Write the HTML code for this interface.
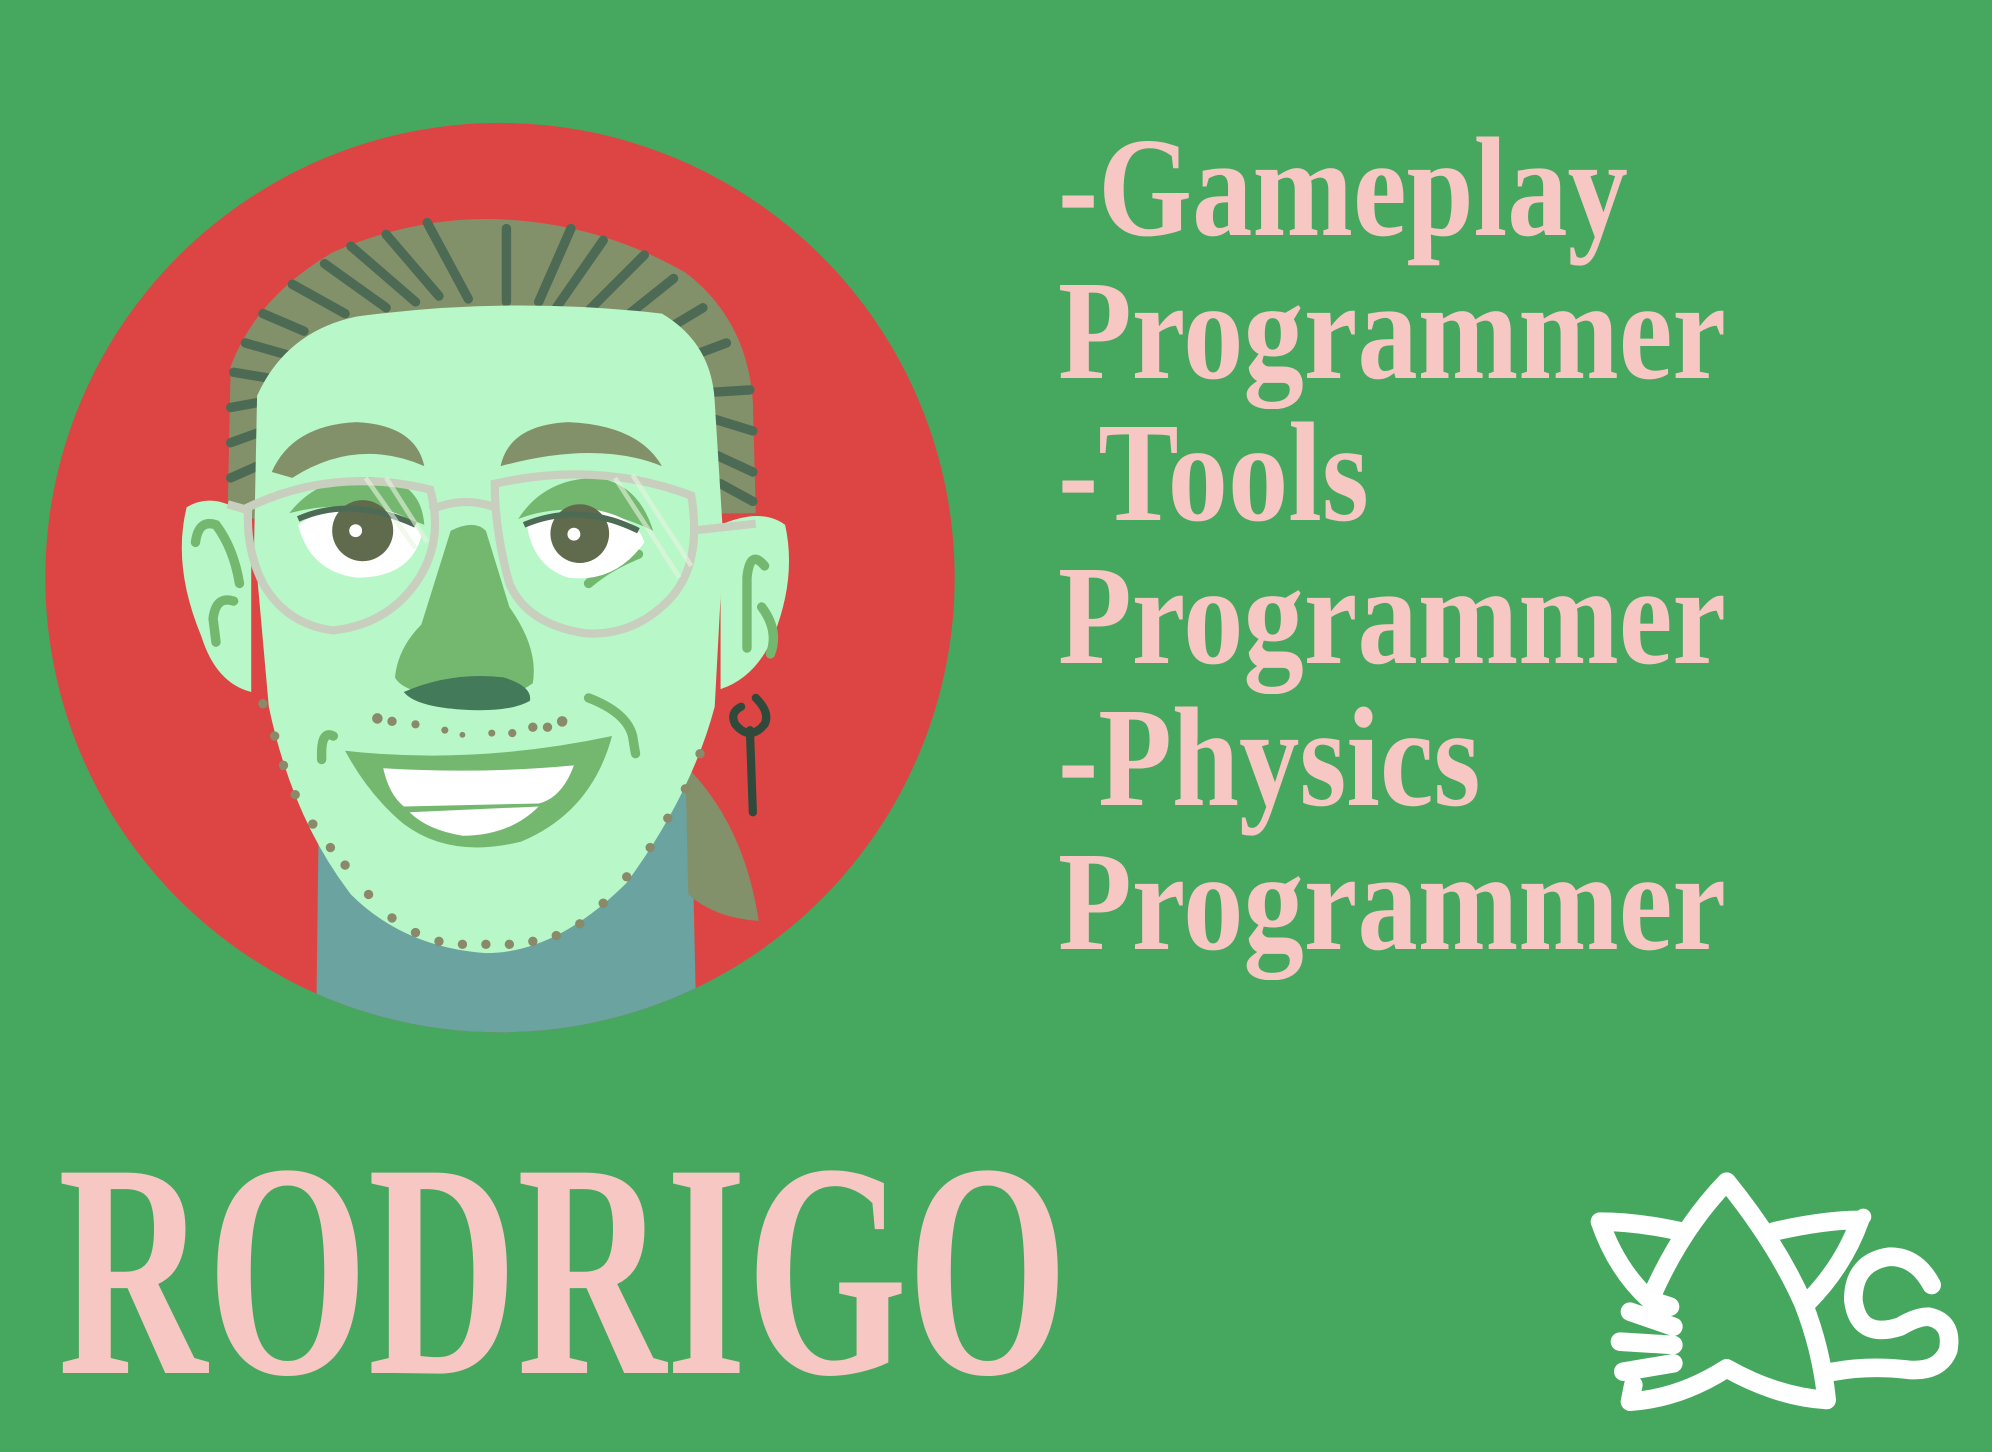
<!DOCTYPE html>
<html><head><meta charset="utf-8"><style>
html,body{margin:0;padding:0}
body{width:1992px;height:1452px;background:#45a85e;position:relative;overflow:hidden;font-family:"Liberation Serif",serif;color:#f6c7c3}
.l{position:absolute;left:1058px;font-size:142px;font-weight:bold;line-height:1;transform:scaleX(0.85);transform-origin:0 0;white-space:nowrap}
.name{position:absolute;left:58px;top:1118px;font-size:306px;font-weight:bold;line-height:1;transform:scaleX(0.675);transform-origin:0 0;white-space:nowrap}
svg{position:absolute;left:0;top:0}
</style></head><body>
<svg width="1992" height="1452" viewBox="0 0 1992 1452">
<defs><clipPath id="c"><circle cx="784" cy="780" r="775"/></clipPath></defs>
<g transform="translate(40,120) scale(0.5867)">
<circle cx="784" cy="780" r="775" fill="#dd4545"/>
<g clip-path="url(#c)">
<path d="M475,1200 L1110,1140 L1120,1600 L470,1600 Z" fill="#6aa3a0"/>
<path d="M1100,1100 Q1200,1200 1225,1365 Q1150,1360 1105,1320 Z" fill="#83916a"/>
<path d="M320,660 L325,420 Q370,300 500,225 Q650,160 800,170 Q960,180 1100,260 Q1205,340 1215,480 L1220,670 L320,680 Z" fill="#83916a"/>
<g stroke="#4d6a55" stroke-width="16" stroke-linecap="round" fill="none">
<path d="M430,280 L520,330"/><path d="M485,245 L590,320"/><path d="M530,215 L640,310"/><path d="M590,195 L680,300"/><path d="M660,175 L730,305"/><path d="M795,185 L795,310"/><path d="M905,185 L850,310"/><path d="M960,205 L880,320"/><path d="M1030,230 L930,330"/><path d="M1080,270 L980,350"/><path d="M1130,320 L1030,380"/><path d="M1170,380 L1090,410"/><path d="M1210,460 L1130,465"/><path d="M1215,530 L1150,510"/><path d="M1215,600 L1150,570"/><path d="M1215,650 L1160,620"/>
<path d="M380,330 L450,360"/><path d="M350,380 L420,400"/><path d="M330,430 L390,440"/><path d="M325,490 L380,480"/><path d="M325,550 L380,530"/><path d="M325,610 L370,590"/>
</g>
<path d="M370,470 Q420,360 540,335 Q800,300 1060,330 Q1145,380 1150,480 L1165,720 L1150,1000 Q1110,1150 1000,1300 Q880,1420 760,1420 Q620,1410 530,1320 Q430,1190 390,1000 L365,720 Z" fill="#b8f8c8"/>
<path d="M360,680 Q300,630 250,660 Q225,760 275,880 Q300,960 360,975 Z" fill="#b8f8c8"/>
<path d="M1160,690 Q1230,660 1270,690 Q1290,780 1250,880 Q1220,950 1160,970 Z" fill="#b8f8c8"/>
<g stroke="#74b870" stroke-width="16" stroke-linecap="round" fill="none">
<path d="M265,720 Q270,680 300,690 Q330,730 340,790"/><path d="M330,820 Q300,810 295,850 L300,890"/>
<path d="M1235,760 Q1210,730 1205,780 L1205,900"/><path d="M1230,830 Q1260,870 1245,910"/>
<path d="M500,1050 Q480,1040 480,1080 L480,1090"/><path d="M935,985 Q1000,1010 1010,1050 L1015,1080"/>
<path d="M935,790 Q970,760 1020,740"/>
</g>
<path d="M395,600 Q430,520 540,515 Q640,520 655,590 Q540,540 430,610 Z" fill="#83916a"/>
<path d="M785,590 Q800,520 900,515 Q1020,520 1060,590 Q950,545 785,590 Z" fill="#83916a"/>
<path d="M425,670 Q480,600 580,610 Q650,620 655,690 Q540,640 425,670 Z" fill="#74b870"/>
<path d="M815,680 Q860,610 950,610 Q1020,620 1045,700 Q920,640 815,680 Z" fill="#74b870"/>
<path d="M440,690 Q480,660 560,660 Q640,670 650,710 Q630,780 540,780 Q460,770 440,690 Z" fill="#fff"/>
<path d="M830,690 Q880,660 950,665 Q1020,680 1030,720 Q980,790 900,780 Q840,760 830,690 Z" fill="#fff"/>
<circle cx="550" cy="700" r="52" fill="#5f6b4c"/><circle cx="920" cy="705" r="50" fill="#5f6b4c"/>
<circle cx="538" cy="700" r="11" fill="#fff"/><circle cx="910" cy="706" r="11" fill="#fff"/>
<path d="M440,680 Q530,640 640,690" stroke="#4d6a55" stroke-width="10" fill="none"/>
<path d="M825,690 Q920,650 1020,700" stroke="#4d6a55" stroke-width="10" fill="none"/>
<path d="M700,700 Q740,680 760,700 L800,830 Q850,900 840,960 Q800,990 720,985 Q620,980 605,950 Q610,900 650,860 Z" fill="#74b870"/>
<path d="M620,975 Q700,940 790,950 Q840,965 835,990 Q800,1010 720,1005 Q640,1000 620,975 Z" fill="#427a5a"/>
<g fill="#8a8a6a"><circle cx="575" cy="1020" r="9"/><circle cx="600" cy="1025" r="8"/><circle cx="640" cy="1030" r="7"/><circle cx="690" cy="1040" r="6"/><circle cx="720" cy="1048" r="5"/><circle cx="770" cy="1045" r="6"/><circle cx="805" cy="1045" r="7"/><circle cx="840" cy="1035" r="8"/><circle cx="865" cy="1035" r="8"/><circle cx="890" cy="1025" r="9"/></g>
<path d="M520,1075 Q740,1100 975,1050 Q940,1180 820,1230 Q700,1260 620,1200 Q560,1150 520,1075 Z" fill="#74b870"/>
<path d="M585,1105 Q750,1115 910,1100 Q890,1155 850,1165 L620,1170 Q595,1150 585,1105 Z" fill="#fff"/>
<path d="M630,1180 Q740,1175 850,1170 Q800,1220 720,1220 Q660,1210 630,1180 Z" fill="#fff"/>
<g stroke="#c8cfbf" stroke-width="14" fill="none">
<path d="M355,660 Q500,590 665,630 Q690,720 640,790 Q590,860 500,870 Q420,860 380,790 Q350,730 355,660 Z"/>
<path d="M775,620 Q950,580 1110,640 Q1130,760 1070,820 Q1010,880 930,875 Q830,860 800,790 Q775,700 775,620 Z"/>
<path d="M665,665 Q720,640 775,660"/><path d="M320,655 L355,665"/><path d="M1110,700 L1220,688"/>
</g>
<g stroke="#e8f4e0" stroke-width="8" opacity="0.6"><path d="M555,610 L640,730"/><path d="M590,610 L660,720"/><path d="M980,610 L1090,780"/><path d="M1010,605 L1110,760"/></g>
<path d="M1215,1180 L1210,1040 M1220,985 Q1245,1010 1235,1030 Q1210,1060 1185,1030 Q1175,1010 1195,1000" stroke="#2f4a3a" stroke-width="14" stroke-linecap="round" fill="none"/>
<g fill="#8a8a6a"><circle cx="380" cy="995" r="8"/><circle cx="400" cy="1050" r="8"/><circle cx="415" cy="1100" r="8"/><circle cx="435" cy="1150" r="8"/><circle cx="465" cy="1200" r="8"/><circle cx="495" cy="1240" r="8"/><circle cx="520" cy="1270" r="8"/><circle cx="560" cy="1320" r="8"/><circle cx="600" cy="1360" r="8"/><circle cx="640" cy="1385" r="8"/><circle cx="680" cy="1400" r="8"/><circle cx="720" cy="1405" r="8"/><circle cx="760" cy="1405" r="8"/><circle cx="800" cy="1405" r="8"/><circle cx="840" cy="1400" r="8"/><circle cx="880" cy="1390" r="8"/><circle cx="920" cy="1370" r="8"/><circle cx="960" cy="1335" r="8"/><circle cx="1000" cy="1290" r="8"/><circle cx="1040" cy="1240" r="8"/><circle cx="1070" cy="1190" r="8"/><circle cx="1100" cy="1140" r="8"/><circle cx="1125" cy="1080" r="8"/></g>
</g>
</g>
<g transform="translate(1570,1150) scale(0.3333)" stroke="#fff" stroke-width="56" stroke-linecap="round" stroke-linejoin="round" fill="none">
<path d="M240,450 Q330,240 470,95 Q620,280 700,460 Q755,600 770,750 Q620,740 470,655 Q330,745 180,755 L190,705"/>
<path d="M335,245 Q200,215 90,215 Q140,360 240,450 L300,470"/>
<path d="M610,245 Q760,210 870,210 Q820,350 710,460"/>
<path d="M180,485 L310,530"/><path d="M150,575 L310,585"/><path d="M160,665 L310,640"/>
<path d="M1085,405 Q1040,320 960,320 Q850,335 850,450 Q865,570 990,530 Q1040,500 1075,500 Q1150,515 1135,600 Q1110,665 1020,660 Q900,645 790,665"/>
<circle cx="880" cy="200" r="14" stroke-width="20"/>
</g>
</svg>
<div class="l" style="top:116px">-Gameplay</div>
<div class="l" style="top:259px">Programmer</div>
<div class="l" style="top:401px">-Tools</div>
<div class="l" style="top:544px">Programmer</div>
<div class="l" style="top:686px">-Physics</div>
<div class="l" style="top:830px">Programmer</div>
<div class="name">RODRIGO</div>
</body></html>
